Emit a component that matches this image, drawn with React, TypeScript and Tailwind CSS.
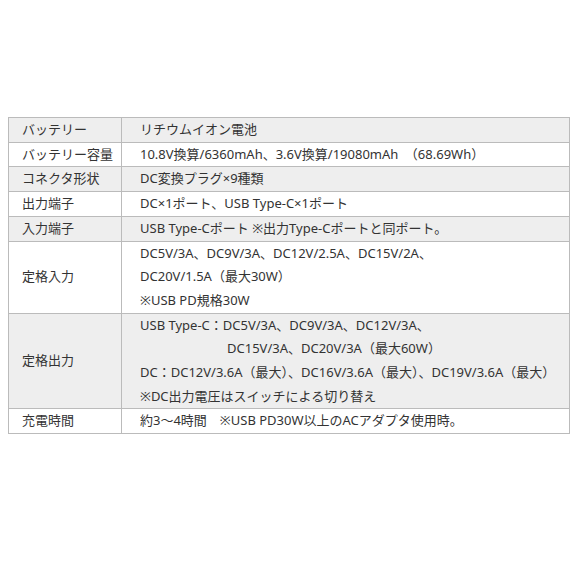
type Row = { label: string; lines: React.ReactNode[]; gray: boolean }

const rows: Row[] = [
  { label: "バッテリー", lines: ["リチウムイオン電池"], gray: true },
  { label: "バッテリー容量", lines: ["10.8V換算/6360mAh、3.6V換算/19080mAh　（68.69Wh）"], gray: false },
  { label: "コネクタ形状", lines: ["DC変換プラグ×9種類"], gray: true },
  { label: "出力端子", lines: ["DC×1ポート、USB Type-C×1ポート"], gray: false },
  { label: "入力端子", lines: ["USB Type-Cポート ※出力Type-Cポートと同ポート。"], gray: true },
  {
    label: "定格入力",
    lines: ["DC5V/3A、DC9V/3A、DC12V/2.5A、DC15V/2A、", "DC20V/1.5A（最大30W）", "※USB PD規格30W"],
    gray: false,
  },
  {
    label: "定格出力",
    lines: [
      "USB Type-C：DC5V/3A、DC9V/3A、DC12V/3A、",
      <span className="pl-[87px]">DC15V/3A、DC20V/3A（最大60W）</span>,
      "DC：DC12V/3.6A（最大）、DC16V/3.6A（最大）、DC19V/3.6A（最大）",
      "※DC出力電圧はスイッチによる切り替え",
    ],
    gray: true,
  },
  { label: "充電時間", lines: ["約3〜4時間　※USB PD30W以上のACアダプタ使用時。"], gray: false },
]

export default function App() {
  return (
    <div
      className="w-[580px] h-[580px] bg-white pt-[117px] pl-2 text-[13px] text-[#333]"
      style={{ fontFamily: '"Noto Sans", "Noto Sans CJK JP", sans-serif' }}
    >
      <table className="w-[562px] table-fixed border-collapse">
        <colgroup>
          <col className="w-[113px]" />
          <col />
        </colgroup>
        <tbody>
          {rows.map((r) => (
            <tr key={r.label} className={r.gray ? "bg-[#eeeeee]" : "bg-white"}>
              <td className="border border-[#bbbbbb] pl-[13px] align-middle leading-[23.7px] whitespace-nowrap">
                {r.label}
              </td>
              <td className="border border-[#bbbbbb] pl-[18px] leading-[23.7px] whitespace-nowrap">
                {r.lines.map((l, i) => (
                  <div key={i}>{l}</div>
                ))}
              </td>
            </tr>
          ))}
        </tbody>
      </table>
    </div>
  )
}
